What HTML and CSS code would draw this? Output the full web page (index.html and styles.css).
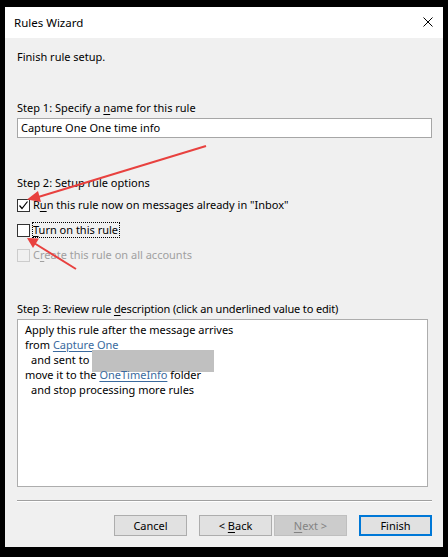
FILE: index.html
```html
<!DOCTYPE html>
<html>
<head>
<meta charset="utf-8">
<link rel="stylesheet" href="styles.css">
</head>
<body>
<div class="window">
  <div class="titlebar">
    <span class="title">Rules Wizard</span>
    <svg class="close" width="10" height="10" viewBox="0 0 10 10"><path d="M0.5 0.5L9.5 9.5M9.5 0.5L0.5 9.5" stroke="#000" stroke-width="1"/></svg>
  </div>
  <div class="body">
    <div class="intro">Finish rule setup.</div>
    <div class="step step1">Step 1: Specify a <u>n</u>ame for this rule</div>
    <div class="input">Capture One One time info</div>
    <div class="step step2">Step 2: Setup rule options</div>
    <div class="options">
      <div class="opt">
        <span class="cb"><svg width="11" height="11" viewBox="0 0 11 11"><path d="M1.5 5.5L4 8.5L9.5 1.5" fill="none" stroke="#000" stroke-width="1.2"/></svg></span>
        <span class="lbl">R<u>u</u>n this rule now on messages already in "Inbox"</span>
      </div>
      <div class="opt">
        <span class="cb"></span>
        <span class="lbl focus"><u>T</u>urn on this rule</span>
      </div>
      <div class="opt disabled">
        <span class="cb"></span>
        <span class="lbl">C<u>r</u>eate this rule on all accounts</span>
      </div>
    </div>
    <div class="step step3">Step 3: Review rule <u>d</u>escription (click an underlined value to edit)</div>
    <div class="desc">
      <div class="line">Apply this rule after the message arrives</div>
      <div class="line">from <a class="link">Capture One</a></div>
      <div class="line indent">and sent to <span class="redact"></span></div>
      <div class="line">move it to the <a class="link">OneTimeInfo</a> folder</div>
      <div class="line indent">and stop processing more rules</div>
    </div>
    <div class="sep"></div>
    <div class="buttons">
      <button class="btn">Cancel</button>
      <div class="pair">
        <button class="btn">&lt; <u>B</u>ack</button>
        <button class="btn disabled"><u>N</u>ext &gt;</button>
      </div>
      <button class="btn default">Finish</button>
    </div>
  </div>
  <svg class="annot" width="438" height="540" viewBox="0 0 438 540">
    <g stroke="#e8413f" stroke-width="2" fill="#e8413f">
      <line x1="201" y1="139" x2="30" y2="191"/>
      <polygon points="22,192.5 33,184 36,195" stroke="none"/>
      <line x1="71" y1="262" x2="29" y2="236"/>
      <polygon points="22,231 34,231.5 28,241" stroke="none"/>
    </g>
  </svg>
</div>
</body>
</html>
```
FILE: styles.css
```css
html, body {
  margin: 0;
  padding: 0;
  background: #000;
}
body {
  width: 448px;
  height: 557px;
  overflow: hidden;
  font-family: "Noto Sans", "Open Sans", sans-serif;
  font-size: 11px;
  color: #000;
}
.window {
  position: relative;
  width: 438px;
  height: 540px;
  margin: 7px 0 0 5px;
  background: #f0f0f0;
  display: flex;
  flex-direction: column;
}
.titlebar {
  height: 31px;
  background: #fff;
  display: flex;
  align-items: center;
  justify-content: space-between;
  padding: 0 10px 0 9px;
  flex: none;
}
.title {
  font-size: 11.5px;
  line-height: 15px;
  margin-top: -1px;
}
.close {
  display: block;
  margin-top: -1px;
}
.body {
  flex: 1;
  display: flex;
  flex-direction: column;
  padding: 11px 11px 0 12px;
  line-height: 15px;
}
.intro {
  height: 15px;
}
.step {
  height: 15px;
}
.step3 {
  letter-spacing: -0.15px;
}
.step1 { margin-top: 36px; }
.step2 { margin-top: 37px; }
.step3 { margin-top: 38px; }
u { text-decoration-thickness: 1px; text-underline-offset: 2px; }
.input {
  margin-top: 3px;
  height: 20px;
  box-sizing: border-box;
  border: 1px solid #a6a6a6;
  background: #fff;
  padding: 1px 0 0 3px;
  line-height: 16px;
}
.options {
  display: flex;
  flex-direction: column;
  gap: 9px;
  margin-top: 7px;
}
.opt {
  display: flex;
  align-items: center;
  height: 16px;
}
.cb {
  width: 13px;
  height: 13px;
  box-sizing: border-box;
  border: 1px solid #333;
  background: #fff;
  display: flex;
  align-items: center;
  justify-content: center;
  flex: none;
}
.cb svg { display: block; }
.lbl {
  margin-left: 2px;
  border: 1px dotted transparent;
  padding: 0 1px 0 0;
  line-height: 14px;
}
.lbl.focus {
  border-color: #000;
}
.opt.disabled .cb {
  border-color: #cccccc;
  background: #f0f0f0;
}
.opt.disabled .lbl {
  color: #a0a0a0;
}
.desc {
  margin-top: 3px;
  margin-right: 4px;
  height: 168px;
  box-sizing: border-box;
  border: 1px solid #adadad;
  background: #fff;
  padding: 2px 0 0 7px;
}
.line {
  height: 15px;
  line-height: 15px;
  white-space: pre;
}
.line.indent {
  padding-left: 6px;
}
.link {
  color: #3a6a9e;
  text-decoration: underline;
  text-underline-offset: 2px;
}
.redact {
  display: inline-block;
  width: 122px;
  height: 22px;
  background: #c0c0c0;
  margin: -4px 0 -3px 0;
  vertical-align: middle;
}
.sep {
  margin-top: 13px;
  height: 1px;
  background: #a0a0a0;
  border-bottom: 1px solid #fff;
  flex: none;
}
.buttons {
  margin-top: 13px;
  display: flex;
  justify-content: flex-end;
  gap: 12px;
}
.pair {
  display: flex;
  gap: 2px;
}
.btn {
  width: 73px;
  height: 21px;
  box-sizing: border-box;
  border: 1px solid #adadad;
  background: #e1e1e1;
  font-family: inherit;
  font-size: 11px;
  color: #000;
  padding: 0;
  margin: 0;
  line-height: 15px;
}
.btn.disabled {
  background: #cccccc;
  border-color: #bfbfbf;
  color: #838383;
}
.btn.default {
  border: 2px solid #0078d7;
}
.annot {
  position: absolute;
  left: 0;
  top: 0;
  pointer-events: none;
}
```
